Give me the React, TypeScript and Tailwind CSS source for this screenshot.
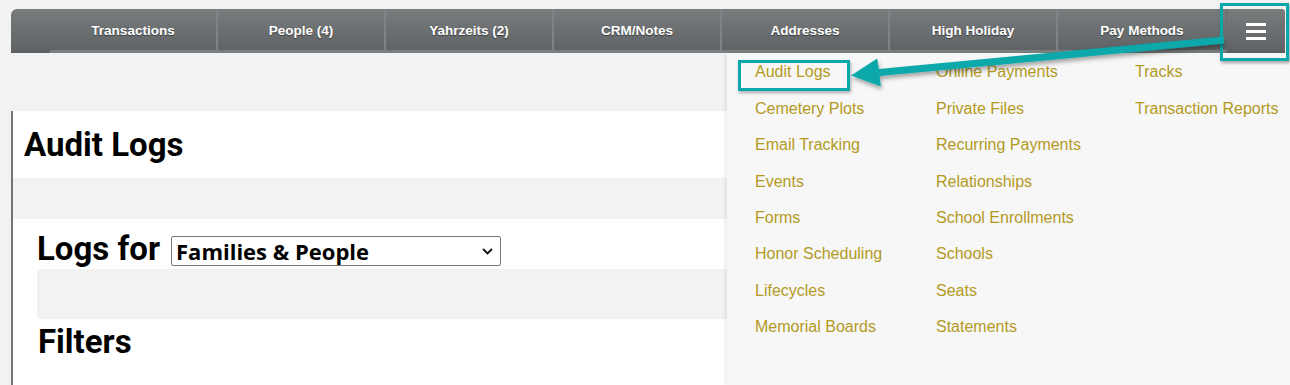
import React from "react";

const tabs = ["Transactions", "People (4)", "Yahrzeits (2)", "CRM/Notes", "Addresses", "High Holiday", "Pay Methods"];
const col1 = ["Audit Logs", "Cemetery Plots", "Email Tracking", "Events", "Forms", "Honor Scheduling", "Lifecycles", "Memorial Boards"];
const col2 = ["Online Payments", "Private Files", "Recurring Payments", "Relationships", "School Enrollments", "Schools", "Seats", "Statements"];
const col3 = ["Tracks", "Transaction Reports"];

function MenuCol({ items, w }: { items: string[]; w: string }) {
  return (
    <div className={`flex flex-col ${w}`}>
      {items.map((t) => (
        <div key={t} className="h-[36.45px] flex items-center text-[16px] text-[#b39a1e] whitespace-nowrap">
          {t}
        </div>
      ))}
    </div>
  );
}

export default function App() {
  return (
    <div className="relative w-[1290px] h-[385px] overflow-hidden bg-[#f2f2f2]" style={{ fontFamily: "'Liberation Sans', Arial, sans-serif" }}>
      {/* Nav bar */}
      <div className="mt-[9px] ml-[11px] w-[1274px] h-[44px] flex rounded-tl-[6px] rounded-tr-[3px] bg-gradient-to-b from-[#787c7d] to-[#5e6264] overflow-hidden">
        <div className="w-[39px] h-full" />
        <div className="flex h-full border-b-[3px] border-[#7c8082]">
          {tabs.map((t, i) => (
            <div
              key={t}
              className={`w-[168px] h-full flex items-center justify-center pt-[3px] text-white font-bold text-[13.5px] [text-shadow:0_1px_1px_rgba(0,0,0,0.45)] ${i < 6 ? "border-r-2 border-[#7f8385]" : ""}`}
            >
              {t}
            </div>
          ))}
        </div>
        <div className="flex-1 h-full flex items-center justify-center border-l border-[#6a6e70]">
          <div className="flex flex-col gap-[4px] mt-[1px]">
            <div className="w-[20px] h-[3px] bg-white" />
            <div className="w-[20px] h-[3px] bg-white" />
            <div className="w-[20px] h-[3px] bg-white" />
          </div>
        </div>
      </div>

      <div className="h-[58px]" />

      {/* Main content */}
      <div className="ml-[11px] border-l-2 border-[#747474] bg-white h-[274px] flex flex-col" style={{ fontFamily: "Roboto, 'Liberation Sans', sans-serif" }}>
        <div className="h-[67px] flex items-start pt-[17px] pl-[11px]">
          <h1 className="text-[33px] font-bold text-black leading-none">Audit Logs</h1>
        </div>
        <div className="h-[41px] bg-[#f2f2f2]" />
        <div className="flex flex-col pl-[24px]">
          <div className="h-[50px] flex items-start gap-[11px]">
            <span className="text-[33px] font-bold text-black leading-none mt-[13px]">Logs for</span>
            <div className="w-[330px] h-[30px] mt-[17px] border border-[#767676] rounded-[2px] flex items-center justify-between pl-[4px] pr-[7px]">
              <span className="text-[22px] font-bold text-black leading-none" style={{ fontFamily: "'Open Sans', Roboto, sans-serif" }}>
                Families &amp; People
              </span>
              <svg width="11" height="7" viewBox="0 0 11 7">
                <path d="M1 1 L5.5 5.5 L10 1" fill="none" stroke="#111" strokeWidth="1.8" />
              </svg>
            </div>
          </div>
          <div className="h-[50px] bg-[#f2f2f2]" />
          <div className="h-[45px] flex items-start pt-[6px]">
            <span className="text-[33px] font-bold text-black leading-none pl-[1px]">Filters</span>
          </div>
          <div className="flex-1 bg-[#f2f2f2]" />
        </div>
      </div>

      {/* Dropdown menu */}
      <div className="absolute left-[727px] top-[53px] right-0 bottom-0 bg-[#f7f7f7] shadow-[-2px_0_4px_rgba(0,0,0,0.08)] flex pl-[28px] pt-[1px]">
        <MenuCol items={col1} w="w-[181px]" />
        <MenuCol items={col2} w="w-[199px]" />
        <MenuCol items={col3} w="flex-1" />
      </div>

      {/* Annotation boxes */}
      <div className="absolute left-[1220px] top-[3px] w-[69px] h-[58px] border-[3px] border-[#0aa8aa] shadow-[1px_2px_3px_rgba(0,0,0,0.35)]" />
      <div className="absolute left-[738px] top-[60px] w-[112px] h-[31px] border-[3px] border-[#0aa8aa] shadow-[1px_2px_3px_rgba(0,0,0,0.3)]" />

      {/* Arrow */}
      <svg className="absolute left-0 top-0" width="1290" height="385" viewBox="0 0 1290 385">
        <defs>
          <filter id="sh" x="-10%" y="-50%" width="120%" height="200%">
            <feDropShadow dx="1" dy="3" stdDeviation="2" floodColor="#000" floodOpacity="0.35" />
          </filter>
        </defs>
        <polygon
          filter="url(#sh)"
          fill="#0aa8aa"
          points="1223.7,36.5 1224.3,43.5 879.6,76 880.9,86.5 851,75.5 877.2,58.5 878.8,69"
        />
      </svg>
    </div>
  );
}
